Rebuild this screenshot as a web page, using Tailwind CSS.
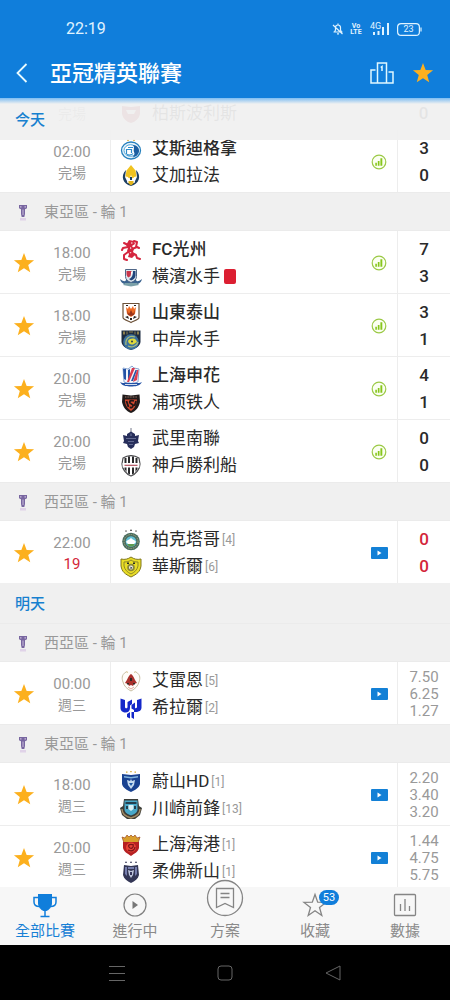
<!DOCTYPE html>
<html lang="zh-Hant">
<head>
<meta charset="utf-8">
<meta name="viewport" content="width=device-width, initial-scale=1">
<title>亞冠精英聯賽</title>
<script src="https://cdn.jsdelivr.net/npm/@tailwindcss/browser@4"></script>
</head>
<body class="bg-white font-[Roboto,'Noto_Sans_CJK_TC','Noto_Sans_CJK_SC',sans-serif] text-[#2a2a2a]">

<svg width="0" height="0" class="absolute" aria-hidden="true">
  <symbol id="star" viewBox="0 0 24 24"><path fill="#fcb01e" d="M12 1l2.9 7.7 8.1.4-6.400 5.100 2.200 8L12 17.700 5.200 22.200l2.200-8L1 9.100l8.100-.4z"/></symbol>
  <symbol id="stats" viewBox="0 0 16 16"><circle cx="8" cy="8" r="6.800" fill="#fbfff2" stroke="#9bc946" stroke-width="1.200"/><path fill="#86c61c" d="M4.300 8.800h1.600v3H4.300zM6.800 7h1.700v4.800H6.800zM9.400 4.300h1.900v7.500H9.400z"/></symbol>
  <symbol id="video" viewBox="0 0 17 12"><rect width="17" height="12" rx="1" fill="#1380d6"/><path fill="#fff" d="M6.500 3.500l4 2.500-4 2.500z"/></symbol>
  <symbol id="league" viewBox="0 0 10 16"><path fill="#7866a0" d="M1 0h8v3.200l-2 1V9l-.7 3H3.700L3 9V4.200l-2-1z"/><path fill="#c9bcdc" d="M2 1.200h1.500v1.300H2zM6.500 1.200H8v1.300H6.500zM4.500 4.500h1V10h-1z"/><path fill="#e0d3e8" d="M2 13h6v2.500H2z"/></symbol>

  <symbol id="persepolis" viewBox="0 0 22 22"><path fill="#a91f2b" d="M2 3l9 1 9-1v8c-1 5-5 8-9 9-4-1-8-4-9-9z"/><path fill="#eee" d="M6 7h10l-2 4H8z"/></symbol>
  <symbol id="esteghlal" viewBox="0 0 22 22"><circle cx="8" cy="2" r="1" fill="#d8ab34"/><circle cx="14" cy="2" r="1" fill="#d8ab34"/><ellipse cx="11" cy="12.500" rx="9.500" ry="8.500" fill="#e9f4fb" stroke="#2680bd" stroke-width="1.300"/><ellipse cx="10.500" cy="12.500" rx="6.500" ry="5.800" fill="#fff" stroke="#4ea4d8"/><path fill="#1c5ea0" d="M13 7c4 0 6.500 3 6 6.500s-3.500 5.500-6.500 6c2-2 2.500-3.500 1.500-5.500s1-4-1-7z"/><path fill="none" stroke="#2f8dcb" stroke-width="1.200" d="M6.500 16v-4.500h5V15M8 9.500h5M7 16.500c2 1 5 .5 6-1"/></symbol>
  <symbol id="gharafa" viewBox="0 0 22 22"><path fill="#1d3f63" d="M6 5c-6 6-3 14 5 16 8-2 11-10 5-16l1 7-3 6H8l-3-6z"/><path fill="#f0c320" d="M11 0l4.500 5.500 1 6L11 14l-5.500-2.500 1-6z"/><path fill="#fff" d="M6.500 11l3 3 1.500-4 1.500 4 3-3-1 7h-7z"/><path fill="#1d3f63" d="M10 12h2v3h-2z"/><path fill="#e2b51c" d="M8.500 16h5v2.500L11 20.500l-2.500-2z"/></symbol>
  <symbol id="guangzhou" viewBox="0 0 22 22"><path fill="none" stroke="#d5263f" stroke-width="2" stroke-linecap="round" stroke-linejoin="round" d="M8 6L4 4M8 8L3 9l-1 2M12 10l5-2 2 1M16 8l1-5-3-1M8 13l-4 3v4l3 1M12 14l4 2 1 3 3 1"/><path fill="#d5263f" d="M9 1l5 1 1 3-3 2 2 3-1 3 2 3-3 3-4-1 1-3-2-3 1-3-2-3z"/><path fill="#fff" d="M11 3.500h1.500v1H11zM10 8l1.500 1-1 1.200zM9.500 13l2 .5-1 1z"/></symbol>
  <symbol id="yokohama" viewBox="0 0 22 22"><path fill="#3c648f" d="M0 13c4 3 6 3 6 0h10c0 3 2 3 6 0-1 4-4 6-11 6S1 17 0 13z"/><path fill="#7aa0a8" d="M5 17h12l2 2-8 1.500L3 19z"/><path fill="#dfe8ee" stroke="#4f6788" d="M5.500 3.500h11v7c0 3-2.500 5-5.500 6-3-1-5.500-3-5.500-6z"/><path fill="#c9354a" d="M6.500 5h5l-1 5-2 1.500C7 10.500 6.500 9 6.500 8z"/><path fill="#21447b" d="M15.500 5v5c-.5 2-2 3.500-4.500 4.500l-2-1.500c3-1 4-4 4-8z"/><path fill="#fff" d="M11 6h1.500l-1 4z"/></symbol>
  <symbol id="shandong" viewBox="0 0 22 22"><path fill="#fff" stroke="#6c5138" stroke-width="1.200" d="M3 1.500h16v14c0 2-4 3-8 5-4-2-8-3-8-5z"/><path fill="#ef6b23" d="M6 5l2 2 1-3 2 3 2-3 1 3 2-2-1 7-4 3-4-3z"/><path fill="#98331a" d="M7 8l2 4 2-4 2 4 2-4-1 5-3 1-3-1z"/><path fill="#28211e" d="M5 15l3-1 1 3zM17 15l-3-1-1 3zM10 16h2v2h-2zM6 3h2v1H6zM14 3h2v1h-2z"/></symbol>
  <symbol id="mariners" viewBox="0 0 22 22"><path fill="#1d2c42" d="M1.500 1.500h19v11c0 4-4 7-9.500 8.500C5.500 19.500 1.500 16.500 1.500 12.500z"/><path fill="#8b7f4d" d="M3 2.500h2v3H3zM6.500 2.500h1v3h-1zM9 2.500h4v1H9zM14.500 2.500h1v3h-1zM17 2.500h2v3h-2z"/><circle cx="11" cy="13" r="7.800" fill="#3b719e"/><path fill="none" stroke="#a9bd7a" stroke-width="1.200" d="M6 16c-1-6 3-10 9-8M8 17c4 2 9 0 10-4"/><path fill="#dfd93b" d="M8 12c2-3 6-3 8-1l1 2-3 2c-2 1-5 1-6-3z"/><circle cx="12" cy="12.500" r="1" fill="#273b4f"/></symbol>
  <symbol id="shenhua" viewBox="0 0 22 22"><path fill="#f3f6fb" stroke="#6f92c8" stroke-width=".8" d="M3 3l5 1 4-3 2 2 5 1-1 13-7 3-7-3z"/><path fill="#2452a5" d="M3 4l3 0v11l-2-1zM8 5l2-1v8l-2 4zM0 17c4 2 5 0 11 1 6-1 7 1 11-1-2 4-7 4.500-11 4.500S2 21 0 17z"/><path fill="#dc3b4f" d="M12 3h3L9 17H7zM17 5l1.500 0L17 15l-4 2z"/><path fill="#2452a5" d="M15.500 5h1.500l-4 11h-2z"/><path fill="#fff" d="M5 19h12v.8H5z"/></symbol>
  <symbol id="pohang" viewBox="0 0 22 22"><path fill="#211b1b" d="M2.500 2.500l8.500 1 8.500-1 .5 7.500c-1 5-4 9-9 11C6 19 3 15 2 10z"/><path fill="#d4492f" d="M5 7.500h12l-.8 4.500c-1 3-2.700 5-5.200 7C8 17 5.800 14 5.200 11z"/><path fill="none" stroke="#9e7a6c" stroke-dasharray="1 .6" d="M5 5h12"/><path fill="none" stroke="#221818" stroke-width="1.800" d="M14 9c-3-1-5 0-4 2l3 2c0 3-2 3-3 2M6.500 9l2 6M16 9l-1.500 5"/></symbol>
  <symbol id="buriram" viewBox="0 0 22 22"><path fill="none" stroke="#75788a" d="M11 0v4"/><path fill="#272e5b" d="M7 6l4-2.500L15 6v2l4-1-1 6 1 2-4 1-1 3-3 2-3-2-1-3-4-1 1-2-1-6 4 1z"/><path fill="#777fa4" d="M6 10h10v.8H6zM8 13h6v.8H8zM10.500 5.500h1V8h-1zM9 16h4v.8H9z"/></symbol>
  <symbol id="kobe" viewBox="0 0 22 22"><path fill="#fff" stroke="#4b4b4e" stroke-width="1.200" d="M3 3c5-3 11-3 16 0l1 6c0 5-4 10-9 12-5-2-9-7-9-12z"/><path fill="#29292b" d="M4.500 3h2v14l-2-3zM8 1.500h2v18l-2-1zM12 1.500h2v17l-2 1zM15.500 3h2v11l-2 3z"/><path fill="#fff" d="M2.600 8h16.800v4.500H2.600z"/><path fill="#b9606d" d="M4.500 9.700h13V11h-13z"/></symbol>
  <symbol id="pakhtakor" viewBox="0 0 22 22"><path fill="#333" d="M6 1l1 1.500H5zM11 0l1 2h-2zM16 1l1 1.500h-2z"/><circle cx="11" cy="12.500" r="8.800" fill="#496c60"/><circle cx="11" cy="12.500" r="7" fill="none" stroke="#a5a57a" stroke-dasharray="1.500 1"/><circle cx="11" cy="12.500" r="5.300" fill="#62bfd3"/><path fill="#fff" d="M6 13c1-2 3-2 5-4 2 2 4 2 5 4l-2 2H8z"/><path fill="#5e9b4e" d="M7 15h8l-2 2.500H9z"/></symbol>
  <symbol id="wasl" viewBox="0 0 22 22"><path fill="#e9dd25" stroke="#80771d" d="M1 3c4 1 7 0 10-2 3 2 6 3 10 2v7c-1 6-4 8-10 11C5 18 2 16 1 10z"/><path fill="none" stroke="#8f872a" stroke-width="1" d="M4 6c3 0 5-.5 7-2 2 1.500 4 2 7 2v4c-1 4-3 6-7 8-4-2-6-4-7-8z"/><circle cx="11" cy="11.500" r="3.800" fill="#8b8736"/><circle cx="11" cy="11.500" r="2" fill="#eee"/><path fill="#252a26" d="M10.500 10.500l2 1.500-2 1zM7 6.500h2V8H7zM13 6.500h2V8h-2z"/></symbol>
  <symbol id="rayyan" viewBox="0 0 22 22"><path fill="#fffdf9" stroke="#c9bfa4" d="M6 2c-5 3-4 7-3 10 1 4 4 7 8 9 4-2 7-5 8-9 1-3 2-7-3-10"/><path fill="#c1aa66" d="M6 1l2 1-1 1zM16 1l-2 1 1 1z"/><path fill="#a9312c" d="M11 4c3 2 3 5 6 9l-3 1-1 2-2-1-2 1-1-2-3-1c3-4 3-7 6-9z"/><path fill="#312a26" d="M10 8h2v3h-2zM7 13h2v1.500H7zM13 13h2v1.500h-2z"/><path fill="none" stroke="#e2aba1" d="M8 17l3 2 3-2"/></symbol>
  <symbol id="hilal" viewBox="0 0 22 22"><path fill="#1428c9" d="M.5 1.500L5 3v7c0 1.800 2.500 1.800 2.500 0V5L12 2.500V7L10 8.500V11c0 3-2 4.500-4.500 4.500S.5 14 .5 11zM21.500 1.500L17 3v7c0 1-1 1.500-2 1V5.500L11.500 8v3.500l2.500 1.500v9l-2.500-1.500V15l4 0c3.500 0 6-1.500 6-4.500zM7 17l3-2v6.500L7 20z"/></symbol>
  <symbol id="ulsan" viewBox="0 0 22 22"><path fill="#d5ad3b" d="M6 .5h1.500v1.200H6zM10.200 0h1.500v1.200h-1.500zM14.500.5H16v1.200h-1.500z"/><path fill="#1a4391" d="M2 3l9 1 9-1v10c-1 4-5 6-9 8-4-2-8-4-9-8z"/><path fill="#82b5dd" d="M4 5l7 1 7-1v1.500l-7 1-7-1z"/><path fill="#c7dcf0" d="M11 8l1 2 3-1-1 5-3 4-3-4-1-5 3 1z"/><path fill="#235da8" d="M9 12h4l-2 3z"/></symbol>
  <symbol id="kawasaki" viewBox="0 0 22 22"><path fill="#3b3d38" d="M4 1h14l1 7 3 2-2 7-5 4H7l-5-4-2-7 3-2z"/><path fill="#48a8c9" d="M4.500 2.500h13v9c0 3-3.500 5-6.500 6-3-1-6.500-3-6.500-6z"/><path fill="none" stroke="#a38a63" stroke-width="1.500" d="M2 11c0 5 3 7 9 9 6-2 9-4 9-9"/><path fill="#24404f" d="M5.500 4h11v2h-11zM6 8h2v3H6zM14 8h2v3h-2z"/><path fill="#d8f0f4" d="M8.500 7h5v4L11 13l-2.500-2z"/></symbol>
  <symbol id="haigang" viewBox="0 0 22 22"><path fill="#d99f2c" stroke="#9e4c23" stroke-width=".7" d="M2 3l3 1 2-3 2 2 2-2 2 2 2-2 2 3 3-1-2 6H4z"/><path fill="#b62022" d="M3 8h16v6c-1 4-4 5-8 8-4-3-7-4-8-8z"/><circle cx="11" cy="13.500" r="5" fill="#e84336"/><path fill="none" stroke="#7a1418" stroke-width="1.200" d="M14 11c-5-2-7 1-4 3 2 1 4-1 3-3M8 16c4 2 7 0 7-3"/></symbol>
  <symbol id="johor" viewBox="0 0 22 22"><path fill="#343756" d="M6 0l1 2H5zM11 0l1 2h-2zM16 0l1 2h-2zM4 4l7 1 7-1 1 10c-1 4-4 6-8 8-4-2-7-4-8-8z"/><path fill="#767ead" d="M5 6h2v9l-2-2zM15 6h2v7l-2 2zM8 6h6v2H8z"/><path fill="#bfc6dc" d="M8 9l3 1 3-1-1 5-2 3-2-3z"/><path fill="#36365c" d="M10 11h2v3h-2z"/></symbol>
</svg>

<div class="flex h-screen flex-col overflow-hidden">
  <header class="relative z-20 shrink-0 bg-[#107edb] text-white">
    <div class="flex h-12 items-center justify-between pt-[10px] pl-[66px] pr-7 text-[16px]">
      <time class="text-[#e0f3ff]">22:19</time>
      <div class="flex items-center text-[#e0f3ff]">
        <svg class="mr-[6px] h-3 w-3" viewBox="0 0 12 12" fill="none" stroke="currentColor" stroke-width="1.200"><path d="M2.500 9h7L8.500 7V4.500a2.500 2.500 0 0 0-5 0V7zM1.500 9h9M5 10.900h2M6 .5V2M1 2l9.500 9"/></svg>
        <span class="mr-[8px] flex w-[12px] flex-col items-center text-[7px] leading-[6px] font-bold"><span>Vo</span><span>LTE</span></span>
        <span class="relative mr-[7px] h-[14px] w-5">
          <svg class="h-[14px] w-5" viewBox="0 0 20 14" fill="currentColor"><path d="M3 10h2v3H3zM7.500 9h2v4h-2zM12 5h2v8h-2zM17 1h2v12h-2z"/></svg>
          <span class="absolute top-0 left-0 text-[9px] leading-[9px]">4G</span>
        </span>
        <span class="relative flex h-[13px] w-[25px] items-center justify-center pr-[2px] text-[9px] leading-none">
          <svg class="absolute inset-0 h-[13px] w-[25px]" viewBox="0 0 25 13" fill="none" stroke="currentColor" stroke-width="1.200"><rect x=".6" y=".6" width="21.800" height="11.800" rx="3.500"/><path d="M24 4.500v4"/></svg>
          23
        </span>
      </div>
    </div>
    <div class="flex h-[50px] items-center pl-3 pr-4">
      <button aria-label="返回" class="flex h-8 w-5 items-center justify-center"><svg class="h-5 w-3" viewBox="0 0 12 20" fill="none" stroke="#e8fbff" stroke-width="1.800"><path d="M10.500 1L1.500 10l9 9"/></svg></button>
      <h1 class="ml-[18px] flex-1 text-[22px] font-medium">亞冠精英聯賽</h1>
      <button aria-label="積分榜" class="mr-[18px]"><svg class="h-[22px] w-6" viewBox="0 0 24 22" fill="none" stroke="#e0f8ff" stroke-width="1.500"><path d="M7.500 21V1h9v20M5.500 8H1v13h22V10h-4.500M10.700 5.500L12 4.500V9"/></svg></button>
      <button aria-label="取消收藏聯賽"><svg class="h-[22px] w-[22px]"><use href="#star"/></svg></button>
    </div>
  </header>

  <main class="relative min-h-0 flex-1 overflow-hidden">
    <div class="absolute inset-x-0 top-0 z-10 flex h-[42px] items-center bg-[#f0f0f0]/94 pt-[2px] pl-[15px] text-[15px] font-medium text-[#1780cf]">
      <div class="absolute inset-x-0 top-0 h-[6px] bg-linear-to-b from-[#7dbdf2] to-transparent"></div>
      <h2>今天</h2>
    </div>
    <div id="matches"></div>
  </main>

  <nav class="relative z-20 grid h-[58px] shrink-0 grid-cols-5 grid-rows-[58px] bg-[#f7f7f7] text-[15px] leading-5 text-[#8a8a8a]">
    <a href="#all" class="flex flex-col items-center justify-end gap-[2px] pb-1 text-[#1780d5]">
      <svg class="h-7 w-7 shrink-0" viewBox="0 0 28 28"><path fill="#107edb" d="M7 3h14v9c0 4-3 7-5.500 8h-3C10 19 7 16 7 12z"/><path fill="none" stroke="#107edb" stroke-width="1.500" d="M7 6.500H3V11c0 3 2.500 4.500 5.500 4.500M21 6.500h4V11c0 3-2.500 4.500-5.500 4.500M14 19v6M9.500 25.500h9"/></svg>
      全部比賽</a>
    <a href="#live" class="flex flex-col items-center justify-end gap-[2px] pb-1">
      <svg class="h-7 w-7 shrink-0" viewBox="0 0 28 28"><circle cx="14" cy="14" r="11" fill="none" stroke="#808080" stroke-width="1.200"/><path fill="#777" d="M11.500 10l5.500 4-5.500 4z"/></svg>
      進行中</a>
    <a href="#plans" class="flex flex-col items-center justify-end gap-1 pb-1">
      <svg class="h-[38px] w-[38px] shrink-0" viewBox="0 0 38 38" fill="none" stroke="#858585" stroke-width="1.300"><circle cx="19" cy="19" r="17.500" fill="#f8f8f8"/><path d="M10.500 9.500h17v19L19 24.500l-8.500 4zM14.500 14.500h9M14.500 18.500h9"/></svg>
      方案</a>
    <a href="#favorites" class="relative flex flex-col items-center justify-end gap-[2px] pb-1">
      <svg class="h-7 w-7 shrink-0" viewBox="0 0 28 28" fill="none" stroke="#858585" stroke-width="1.300"><path d="M14 3.500l2.700 7.700 8.300.2-6.500 5 2.300 8.100-6.800-4.700-6.800 4.700 2.300-8.100-6.500-5 8.300-.2z"/></svg>
      收藏
      <span class="absolute top-[3px] left-1/2 ml-1 flex h-[15px] w-5 items-center justify-center rounded-full bg-[#107edb] text-[11px] leading-none text-white">53</span></a>
    <a href="#data" class="flex flex-col items-center justify-end gap-[2px] pb-1">
      <svg class="h-7 w-7 shrink-0" viewBox="0 0 28 28" fill="none" stroke="#858585" stroke-width="1.300"><rect x="3.500" y="3.500" width="21" height="21" rx="1"/><path d="M9.500 13v7M14 8v12M18.500 15v5"/></svg>
      數據</a>
  </nav>

  <div class="relative z-20 flex h-[55px] shrink-0 items-center justify-center gap-[92px] bg-black">
    <button aria-label="最近使用"><svg class="h-4 w-4" viewBox="0 0 16 16" fill="none" stroke="#666"><path d="M0 1.500h16M0 8.500h16M0 15.500h16"/></svg></button>
    <button aria-label="主畫面"><svg class="h-4 w-4" viewBox="0 0 16 16" fill="none" stroke="#666"><rect x="1" y="1" width="14" height="14" rx="3"/></svg></button>
    <button aria-label="返回上頁"><svg class="h-4 w-4" viewBox="0 0 16 16" fill="none" stroke="#666"><path stroke-linejoin="round" d="M15 1v14L1 8z"/></svg></button>
  </div>
</div>

<script>
const schedule = [
  { tail: true },
  { match: ['02:00', '完場', ['esteghlal', '艾斯迪格拿', '', true], ['gharafa', '艾加拉法', ''], ['3', '0']], noStar: true },
  { section: '東亞區 - 輪 1' },
  { match: ['18:00', '完場', ['guangzhou', 'FC光州', '', true], ['yokohama', '橫濱水手', '', false, true], ['7', '3']] },
  { match: ['18:00', '完場', ['shandong', '山東泰山', '', true], ['mariners', '中岸水手', ''], ['3', '1']], line: true },
  { match: ['20:00', '完場', ['shenhua', '上海申花', '', true], ['pohang', '浦项铁人', ''], ['4', '1']], line: true },
  { match: ['20:00', '完場', ['buriram', '武里南聯', ''], ['kobe', '神戶勝利船', ''], ['0', '0']], line: true },
  { section: '西亞區 - 輪 1' },
  { match: ['22:00', '19', ['pakhtakor', '柏克塔哥', '[4]'], ['wasl', '華斯爾', '[6]'], ['0', '0']], live: true },
  { day: '明天' },
  { section: '西亞區 - 輪 1' },
  { match: ['00:00', '週三', ['rayyan', '艾雷恩', '[5]'], ['hilal', '希拉爾', '[2]'], ['7.50', '6.25', '1.27']] },
  { section: '東亞區 - 輪 1' },
  { match: ['18:00', '週三', ['ulsan', '蔚山HD', '[1]'], ['kawasaki', '川崎前鋒', '[13]'], ['2.20', '3.40', '3.20']] },
  { match: ['20:00', '週三', ['haigang', '上海海港', '[1]'], ['johor', '柔佛新山', '[1]'], ['1.44', '4.75', '5.75']], line: true },
];

const team = ([logo, name, rank, won, card]) => `
  <div class="flex h-[27px] items-center">
    <svg class="mr-[10px] h-[22px] w-[22px] shrink-0"><use href="#${logo}"/></svg>
    <span class="${won ? 'text-[17px] font-medium whitespace-nowrap' : 'text-[17px] whitespace-nowrap'}">${name}</span>
    ${rank ? `<span class="ml-[2px] text-[12px] text-[#999]">${rank}</span>` : ''}
    ${card ? '<span class="ml-1 h-[15px] w-3 rounded-xs bg-[#dc1f32]" role="img" aria-label="紅牌"></span>' : ''}
  </div>`;

function row(item) {
  const [time, status, home, away, figures] = item.match;
  const odds = figures.length === 3;
  const star = item.noStar ? '' :
    '<button aria-label="取消收藏"><svg class="h-[22px] w-[22px]"><use href="#star"/></svg></button>';
  const icon = odds || item.live
    ? '<svg class="h-3 w-[17px]"><use href="#video"/></svg>'
    : '<svg class="h-4 w-4"><use href="#stats"/></svg>';
  const figureClass = odds ? 'text-[15px] leading-[17px] text-[#999]'
    : item.live ? 'text-[17px] leading-[27px] font-medium text-[#d3263a]'
    : 'text-[17px] leading-[27px] font-medium';
  return `
  <article class="${item.line ? 'flex border-t border-[#ededed] bg-white' : 'flex bg-white'}">
    <div class="flex h-[62px] w-12 shrink-0 items-center justify-center pt-[2px]">${star}</div>
    <div class="flex h-[62px] w-12 shrink-0 flex-col items-center justify-center pt-[4px] text-[#999]">
      <time class="text-[15px] leading-[21px]">${time}</time>
      <span class="${item.live ? 'text-[15px] leading-[21px] text-[#d3263a]' : 'text-[14px] leading-[21px]'}">${status}</span>
    </div>
    <div class="ml-[14px] flex h-[62px] min-w-0 flex-1 flex-col justify-center border-l border-[#ededed] pt-[2px] pl-[9px]">${team(home)}${team(away)}</div>
    <div class="flex h-[62px] w-9 shrink-0 items-center justify-center pt-[2px]">${icon}</div>
    <div class="flex h-[62px] w-[53px] shrink-0 flex-col items-center justify-center border-l border-[#ededed] pt-[2px] ${figureClass}">${figures.map(f => `<span>${f}</span>`).join('')}</div>
  </article>`;
}

// Lower line of the match that is scrolling away under the translucent day bar.
const tail = () => `
  <article class="flex h-8 items-center bg-white">
    <div class="w-12 shrink-0"></div>
    <span class="w-12 shrink-0 text-center text-[14px] text-[#999]">完場</span>
    <div class="ml-[14px] min-w-0 flex-1 pl-[10px]">${team(['persepolis', '柏斯波利斯', ''])}</div>
    <span class="w-[53px] shrink-0 text-center text-[17px] font-medium">0</span>
  </article>`;

document.getElementById('matches').innerHTML = schedule.map(item => {
  if (item.day) return `<h2 class="flex h-10 items-center bg-[#f0f0f0] pt-[2px] pl-[15px] text-[15px] font-medium text-[#1780cf]">${item.day}</h2>`;
  if (item.section) return `<h3 class="flex h-[39px] items-center border-y border-[#ebebeb] bg-[#f0f0f0] pt-[2px] pl-[18px] text-[15px] text-[#999]"><svg class="mr-4 h-4 w-[10px]"><use href="#league"/></svg>${item.section}</h3>`;
  if (item.tail) return tail();
  return row(item);
}).join('');
</script>
</body>
</html>
